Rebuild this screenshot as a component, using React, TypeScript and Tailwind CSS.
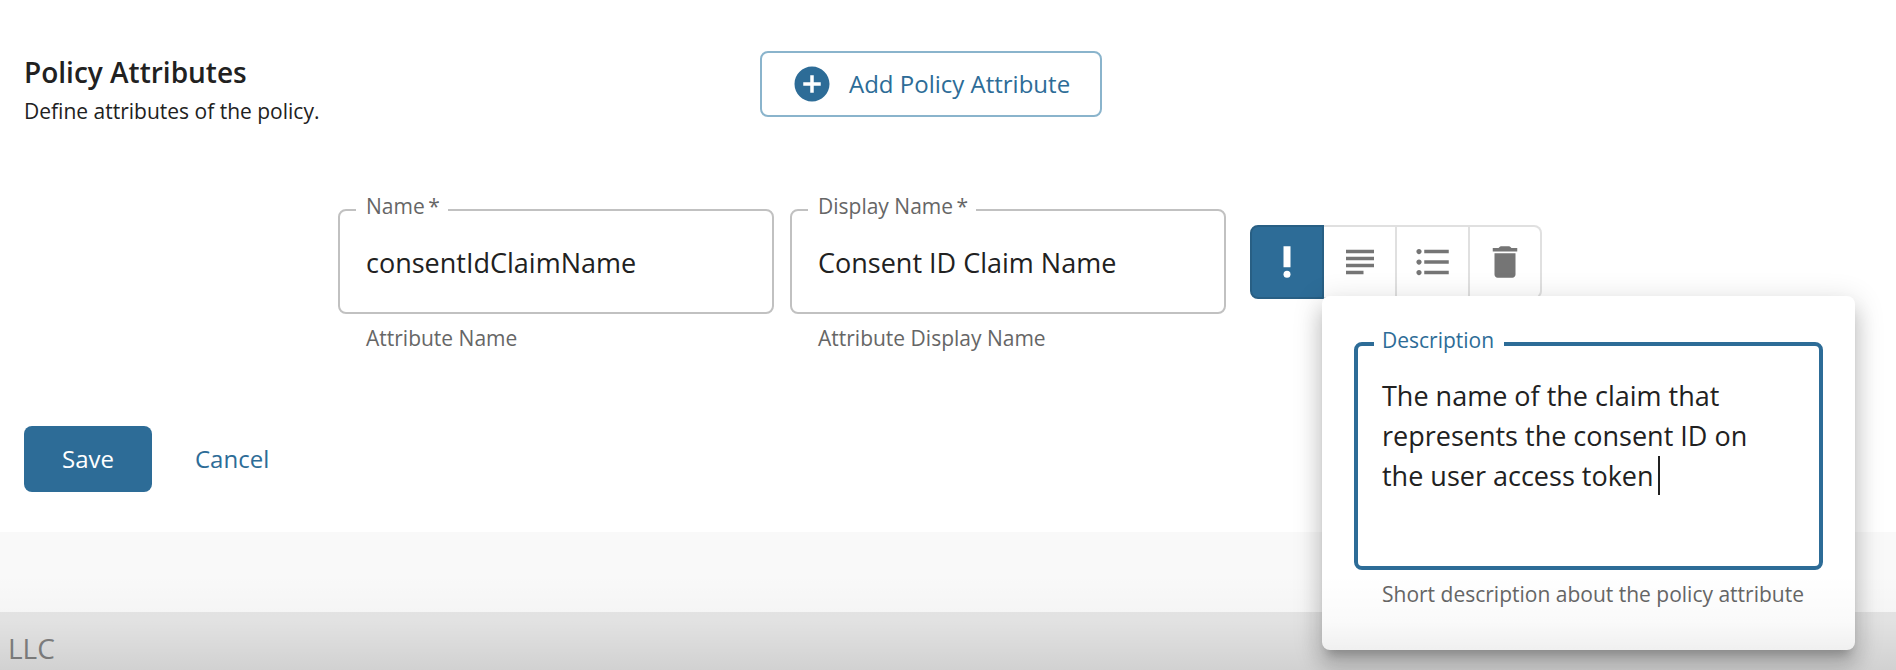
import { useState } from "react";
import type { ReactNode } from "react";
import {
  MdAddCircle,
  MdFormatListBulleted,
  MdPriorityHigh,
  MdSubject,
} from "react-icons/md";

type FieldProps = {
  id: string;
  label: string;
  helper: string;
  initial: string;
};

function TextField({ id, label, helper, initial }: FieldProps) {
  const [value, setValue] = useState(initial);
  return (
    <div className="min-w-0 max-w-[436px] flex-1">
      <fieldset className="min-w-0 rounded-lg border-2 border-[#c1c1c1] px-4">
        <legend className="pr-2 pb-2 pl-2.5 text-[21px] leading-7 text-[#666666]">
          <label htmlFor={id}>{label}&#8201;*</label>
        </legend>
        <input
          id={id}
          value={value}
          onChange={(e) => setValue(e.target.value)}
          aria-describedby={`${id}-help`}
          className="mb-4 block h-[68px] w-full bg-transparent px-2.5 text-[27px] leading-10 text-[#212121] outline-none"
        />
      </fieldset>
      <p id={`${id}-help`} className="mt-2.5 px-7 text-[21px] leading-7 text-[#666666]">
        {helper}
      </p>
    </div>
  );
}

function TrashIcon() {
  return (
    <svg viewBox="0 0 24 24" className="size-[42px]" fill="currentColor" aria-hidden="true">
      <path d="M6 19.2C6 20.2 6.8 21 7.8 21h8.4c1 0 1.8-.8 1.8-1.8V7H6v12.2zM19 4h-3.300l-.9-.8a1 1 0 0 0-.7-.2H9.900a1 1 0 0 0-.7.2l-.9.8H5v2h14V4z" />
    </svg>
  );
}

function ToolButton({ label, children }: { label: string; children: ReactNode }) {
  return (
    <button
      type="button"
      aria-label={label}
      className="flex h-[74px] w-[73px] items-center justify-center border-y-2 border-r-2 border-[#e0e0e0] text-[42px] text-[#757575] nth-[4]:w-[72px] nth-[4]:rounded-r-lg"
    >
      {children}
    </button>
  );
}

function DescriptionPopover() {
  const [text, setText] = useState(
    "The name of the claim that represents the consent ID on the user access token",
  );
  return (
    <div className="absolute top-[71px] left-[72px] z-10 w-[533px] rounded-lg bg-white px-8 pt-[30px] pb-[42px] shadow-[0_10px_10px_-6px_rgba(0,0,0,0.2),0_16px_20px_2px_rgba(0,0,0,0.14),0_6px_28px_4px_rgba(0,0,0,0.12)]">
      <fieldset className="min-w-0 rounded-lg border-4 border-[#2d6c97] px-4">
        <legend className="pr-2.5 pb-2 pl-2 text-[21px] leading-7 text-[#2d6c97]">
          <label htmlFor="description">Description</label>
        </legend>
        <div className="relative pt-3.5 pb-3">
          <textarea
            id="description"
            value={text}
            onChange={(e) => setText(e.target.value)}
            aria-describedby="description-help"
            className="block h-[178px] w-full resize-none bg-transparent px-2 text-[27px] leading-[40px] text-[#212121] caret-transparent outline-none"
          />
          <span aria-hidden="true" className="absolute top-[94px] left-[284px] h-[39px] w-0.5 bg-[#212121]" />
        </div>
      </fieldset>
      <p id="description-help" className="mt-2.5 pl-7 text-[21px] leading-7 whitespace-nowrap text-[#666666]">
        Short description about the policy attribute
      </p>
    </div>
  );
}

export default function App() {
  return (
    <div className="relative flex min-h-screen flex-col overflow-hidden bg-[#f9f9f9] font-['Open_Sans','Noto_Sans',sans-serif] text-[#212121]">
      <main className="bg-white px-6 pt-[51px] pb-10">
        <section className="flex items-start">
          <div className="w-[736px]">
            <h2 className="text-[28px] leading-[42px] font-semibold">Policy Attributes</h2>
            <p className="mt-1 text-[21px] leading-7">Define attributes of the policy.</p>
          </div>
          <button
            type="button"
            className="flex h-[66px] items-center gap-4 rounded-lg border-2 border-[#8ab4cc] pr-[30px] pl-[29px] text-[24px] font-medium text-[#2d6c97]"
          >
            <MdAddCircle className="size-[42px]" />
            Add Policy Attribute
          </button>
        </section>

        <section className="mt-[67px] flex items-start gap-4 pl-[314px]">
          <TextField id="name" label="Name" helper="Attribute Name" initial="consentIdClaimName" />
          <TextField
            id="display-name"
            label="Display Name"
            helper="Attribute Display Name"
            initial="Consent ID Claim Name"
          />
          <div className="relative mt-[33px] ml-2 flex">
            <button
              type="button"
              aria-label="Description"
              aria-expanded="true"
              className="flex size-[74px] items-center justify-center rounded-l-lg border-2 border-[#285f84] bg-[#2d6c97] text-[42px] text-white"
            >
              <MdPriorityHigh />
            </button>
            <ToolButton label="Text">
              <MdSubject />
            </ToolButton>
            <ToolButton label="List">
              <MdFormatListBulleted />
            </ToolButton>
            <ToolButton label="Delete">
              <TrashIcon />
            </ToolButton>
            <DescriptionPopover />
          </div>
        </section>

        <div className="mt-[74px] flex gap-[13px]">
          <button
            type="button"
            className="h-[66px] w-32 rounded-lg bg-[#2d6c97] text-[24px] font-medium text-white"
          >
            Save
          </button>
          <button type="button" className="h-[66px] px-[30px] text-[24px] font-medium text-[#2d6c97]">
            Cancel
          </button>
        </div>
      </main>
      <footer className="mt-20 flex-1 bg-[#e6e6e6] px-2 pt-4 text-[28px] leading-10 text-[#828282]">LLC</footer>
      <div
        aria-hidden="true"
        className="pointer-events-none absolute inset-x-0 bottom-0 z-20 h-24 bg-linear-to-b from-black/0 via-black/2 to-black/9"
      />
    </div>
  );
}
